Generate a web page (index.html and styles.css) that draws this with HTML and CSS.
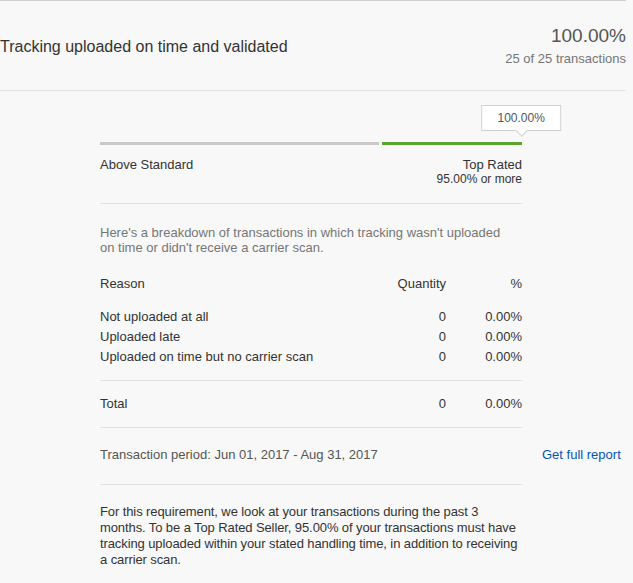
FILE: index.html
```html
<!DOCTYPE html>
<html lang="en">
<head>
<meta charset="utf-8">
<title>Tracking uploaded on time and validated</title>
<link rel="stylesheet" href="styles.css">
</head>
<body>
<div class="page">
  <header class="header">
    <h1 class="title">Tracking uploaded on time and validated</h1>
    <div class="stats">
      <div class="stats-pct">100.00%</div>
      <div class="stats-count">25 of 25 transactions</div>
    </div>
  </header>

  <main class="main">
    <section class="gauge">
      <div class="gauge-head">
        <div class="tip" style="left: 100%">100.00%</div>
      </div>
      <div class="bar">
        <div class="seg seg-above"></div>
        <div class="seg seg-top"></div>
      </div>
      <div class="gauge-labels">
        <div class="label">Above Standard</div>
        <div class="label label-right">
          <div>Top Rated</div>
          <div class="label-sub">95.00% or more</div>
        </div>
      </div>
    </section>

    <p class="intro">Here's a breakdown of transactions in which tracking wasn't uploaded on time or didn't receive a carrier scan.</p>

    <div class="table">
      <div class="row row-head">
        <div>Reason</div>
        <div class="num">Quantity</div>
        <div class="num">%</div>
      </div>
      <div class="rows">
        <div class="row">
          <div>Not uploaded at all</div>
          <div class="num">0</div>
          <div class="num">0.00%</div>
        </div>
        <div class="row">
          <div>Uploaded late</div>
          <div class="num">0</div>
          <div class="num">0.00%</div>
        </div>
        <div class="row">
          <div>Uploaded on time but no carrier scan</div>
          <div class="num">0</div>
          <div class="num">0.00%</div>
        </div>
      </div>
      <div class="row row-total">
        <div>Total</div>
        <div class="num">0</div>
        <div class="num">0.00%</div>
      </div>
    </div>

    <div class="period-row">
      <div class="period">Transaction period: Jun 01, 2017 - Aug 31, 2017</div>
      <a class="report-link" href="#">Get full report</a>
    </div>

    <p class="note">For this requirement, we look at your transactions during the past 3 months. To be a Top Rated Seller, 95.00% of your transactions must have tracking uploaded within your stated handling time, in addition to receiving a carrier scan.</p>
  </main>
</div>
</body>
</html>
```

FILE: styles.css
```css
* {
  box-sizing: border-box;
}

html, body {
  margin: 0;
  padding: 0;
  background: #f8f8f8;
}

body {
  font-family: "Liberation Sans", Arial, sans-serif;
  font-size: 13px;
  color: #333;
}

.page {
  width: 626px;
}

.header {
  display: flex;
  justify-content: space-between;
  align-items: center;
  height: 91px;
  border-top: 1px solid #cfcfcf;
  border-bottom: 1px solid #e2e2e2;
}

.title {
  margin: 3px 0 0 0;
  font-size: 16px;
  font-weight: normal;
  color: #333;
}

.stats {
  text-align: right;
}

.stats-pct {
  font-size: 19px;
  line-height: 22px;
  color: #555;
}

.stats-count {
  margin-top: 4px;
  font-size: 13px;
  line-height: 16px;
  color: #767676;
}

.main {
  padding-left: 100px;
}

.main > * {
  width: 422px;
}

.gauge {
  padding-top: 14px;
  padding-bottom: 16px;
  border-bottom: 1px solid #e2e2e2;
}

.gauge-head {
  position: relative;
  height: 37px;
}

.tip {
  position: absolute;
  top: 0;
  transform: translateX(-51%);
  width: 80px;
  height: 26px;
  line-height: 24px;
  text-align: center;
  font-size: 12px;
  color: #555;
  background: #fff;
  border: 1px solid #d0d0d0;
}

.tip::after {
  content: "";
  position: absolute;
  left: 50%;
  bottom: -5px;
  width: 8px;
  height: 8px;
  margin-left: -4px;
  background: #fff;
  border-right: 1px solid #d0d0d0;
  border-bottom: 1px solid #d0d0d0;
  transform: rotate(45deg);
}

.bar {
  display: flex;
  gap: 3px;
  height: 3px;
}

.seg {
  height: 3px;
}

.seg-above {
  width: 279px;
  background: #c9c9c9;
}

.seg-top {
  flex: 1;
  background: #5ba42d;
}

.gauge-labels {
  display: flex;
  justify-content: space-between;
  margin-top: 12px;
  line-height: 15px;
  font-size: 13px;
}

.label-right {
  text-align: right;
}

.label-sub {
  font-size: 12px;
}

.intro {
  margin: 21px 0 0 0;
  padding-right: 16px;
  line-height: 15px;
  color: #767676;
}

.table {
  margin-top: 19px;
}

.row {
  display: grid;
  grid-template-columns: 1fr 80px 76px;
  line-height: 20px;
}

.num {
  text-align: right;
}

.rows {
  padding-top: 13px;
  padding-bottom: 13px;
  border-bottom: 1px solid #e2e2e2;
}

.row-total {
  padding-top: 13px;
  padding-bottom: 13px;
  border-bottom: 1px solid #e2e2e2;
}

.main > .period-row {
  width: auto;
  display: flex;
  align-items: flex-start;
}

.period {
  width: 422px;
  padding-top: 17px;
  padding-bottom: 19px;
  line-height: 20px;
  color: #555;
  border-bottom: 1px solid #e2e2e2;
}

.report-link {
  margin-left: 20px;
  padding-top: 17px;
  line-height: 20px;
  color: #0654ba;
  text-decoration: none;
}

.note {
  margin: 19px 0 0 0;
  line-height: 16px;
  letter-spacing: -0.1px;
  color: #333;
}
```
